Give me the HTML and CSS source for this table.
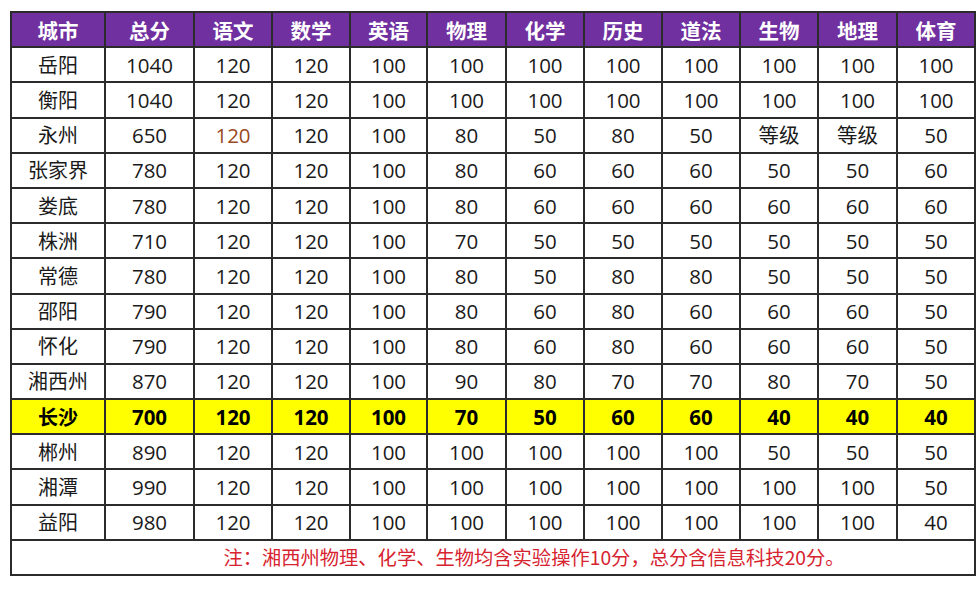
FILE: index.html
```html
<!DOCTYPE html>
<html lang="zh">
<head>
<meta charset="utf-8">
<title>城市中考分值</title>
<link rel="stylesheet" href="styles.css">
</head>
<body>
<div class="page">
<table class="scores">
<colgroup>
<col class="c-city"><col class="c-total"><col class="c-n"><col class="c-n"><col class="c-n3"><col class="c-n2"><col class="c-n"><col class="c-n"><col class="c-n"><col class="c-n"><col class="c-n2"><col class="c-n">
</colgroup>
<thead>
<tr><th>城市</th><th>总分</th><th>语文</th><th>数学</th><th>英语</th><th>物理</th><th>化学</th><th>历史</th><th>道法</th><th>生物</th><th>地理</th><th>体育</th></tr>
</thead>
<tbody>
<tr class="edge-g"><td>岳阳</td><td>1040</td><td>120</td><td>120</td><td>100</td><td>100</td><td>100</td><td>100</td><td>100</td><td>100</td><td>100</td><td>100</td></tr>
<tr class="edge-g"><td>衡阳</td><td>1040</td><td>120</td><td>120</td><td>100</td><td>100</td><td>100</td><td>100</td><td>100</td><td>100</td><td>100</td><td>100</td></tr>
<tr class="edge-r"><td>永州</td><td>650</td><td class="brown">120</td><td>120</td><td>100</td><td>80</td><td>50</td><td>80</td><td>50</td><td>等级</td><td>等级</td><td>50</td></tr>
<tr class="edge-r"><td>张家界</td><td>780</td><td>120</td><td>120</td><td>100</td><td>80</td><td>60</td><td>60</td><td>60</td><td>50</td><td>50</td><td>60</td></tr>
<tr class="edge-r"><td>娄底</td><td>780</td><td>120</td><td>120</td><td>100</td><td>80</td><td>60</td><td>60</td><td>60</td><td>60</td><td>60</td><td>60</td></tr>
<tr class="edge-r"><td>株洲</td><td>710</td><td>120</td><td>120</td><td>100</td><td>70</td><td>50</td><td>50</td><td>50</td><td>50</td><td>50</td><td>50</td></tr>
<tr class="edge-r"><td>常德</td><td>780</td><td>120</td><td>120</td><td>100</td><td>80</td><td>50</td><td>80</td><td>80</td><td>50</td><td>50</td><td>50</td></tr>
<tr class="edge-r"><td>邵阳</td><td>790</td><td>120</td><td>120</td><td>100</td><td>80</td><td>60</td><td>80</td><td>60</td><td>60</td><td>60</td><td>50</td></tr>
<tr class="edge-r"><td>怀化</td><td>790</td><td>120</td><td>120</td><td>100</td><td>80</td><td>60</td><td>80</td><td>60</td><td>60</td><td>60</td><td>50</td></tr>
<tr class="edge-r"><td>湘西州</td><td>870</td><td>120</td><td>120</td><td>100</td><td>90</td><td>80</td><td>70</td><td>70</td><td>80</td><td>70</td><td>50</td></tr>
<tr class="edge-r hl"><td>长沙</td><td>700</td><td>120</td><td>120</td><td>100</td><td>70</td><td>50</td><td>60</td><td>60</td><td>40</td><td>40</td><td>40</td></tr>
<tr class="edge-r"><td>郴州</td><td>890</td><td>120</td><td>120</td><td>100</td><td>100</td><td>100</td><td>100</td><td>100</td><td>50</td><td>50</td><td>50</td></tr>
<tr class="edge-r"><td>湘潭</td><td>990</td><td>120</td><td>120</td><td>100</td><td>100</td><td>100</td><td>100</td><td>100</td><td>100</td><td>100</td><td>50</td></tr>
<tr class="edge-r"><td>益阳</td><td>980</td><td>120</td><td>120</td><td>100</td><td>100</td><td>100</td><td>100</td><td>100</td><td>100</td><td>100</td><td>40</td></tr>
</tbody>
<tfoot>
<tr><td colspan="12" class="note">注：湘西州物理、化学、生物均含实验操作10分，总分含信息科技20分。</td></tr>
</tfoot>
</table>
</div>
</body>
</html>
```

FILE: styles.css
```css
html, body {
  margin: 0;
  padding: 0;
  background: #ffffff;
}

.page {
  padding: 11px 0 0 10px;
}

.scores {
  border-collapse: collapse;
  table-layout: fixed;
  width: 966px;
  font-family: "Open Sans", "Noto Sans CJK SC", sans-serif;
  color: #1a1a1a;
}

.c-city { width: 94px; }
.c-total { width: 89px; }
.c-n { width: 78px; }
.c-n2 { width: 79px; }
.c-n3 { width: 77px; }

.scores th,
.scores td {
  border: 2px solid #2b2b2b;
  text-align: center;
  vertical-align: middle;
  padding: 0;
  white-space: nowrap;
  overflow: hidden;
}

.scores th {
  background: #7030a0;
  color: #ffffff;
  font-family: "Noto Sans CJK SC", sans-serif;
  font-weight: 700;
  font-size: 20.5px;
  height: 33.2px;
  line-height: 24px;
}

.scores tbody td {
  font-size: 20.5px;
  height: 33.2px;
  line-height: 24px;
}

.scores tbody td:first-child {
  font-family: "Noto Sans CJK SC", sans-serif;
  font-size: 20px;
}

.scores tbody td.brown {
  color: #9a4a22;
}

.scores tr.hl td {
  background: #ffff00;
  font-weight: 700;
  color: #000000;
}

.scores tr.edge-g td:last-child {
  box-shadow: 2px 0 0 #4d7a36;
}

.scores tr.edge-r td:last-child {
  box-shadow: 2px 0 0 #a8231d;
}

.scores td.note {
  height: 33px;
  line-height: 24px;
  color: #d7232f;
  font-family: "Noto Sans CJK SC", sans-serif;
  font-size: 19.3px;
  padding-left: 82px;
  text-align: center;
}
```
